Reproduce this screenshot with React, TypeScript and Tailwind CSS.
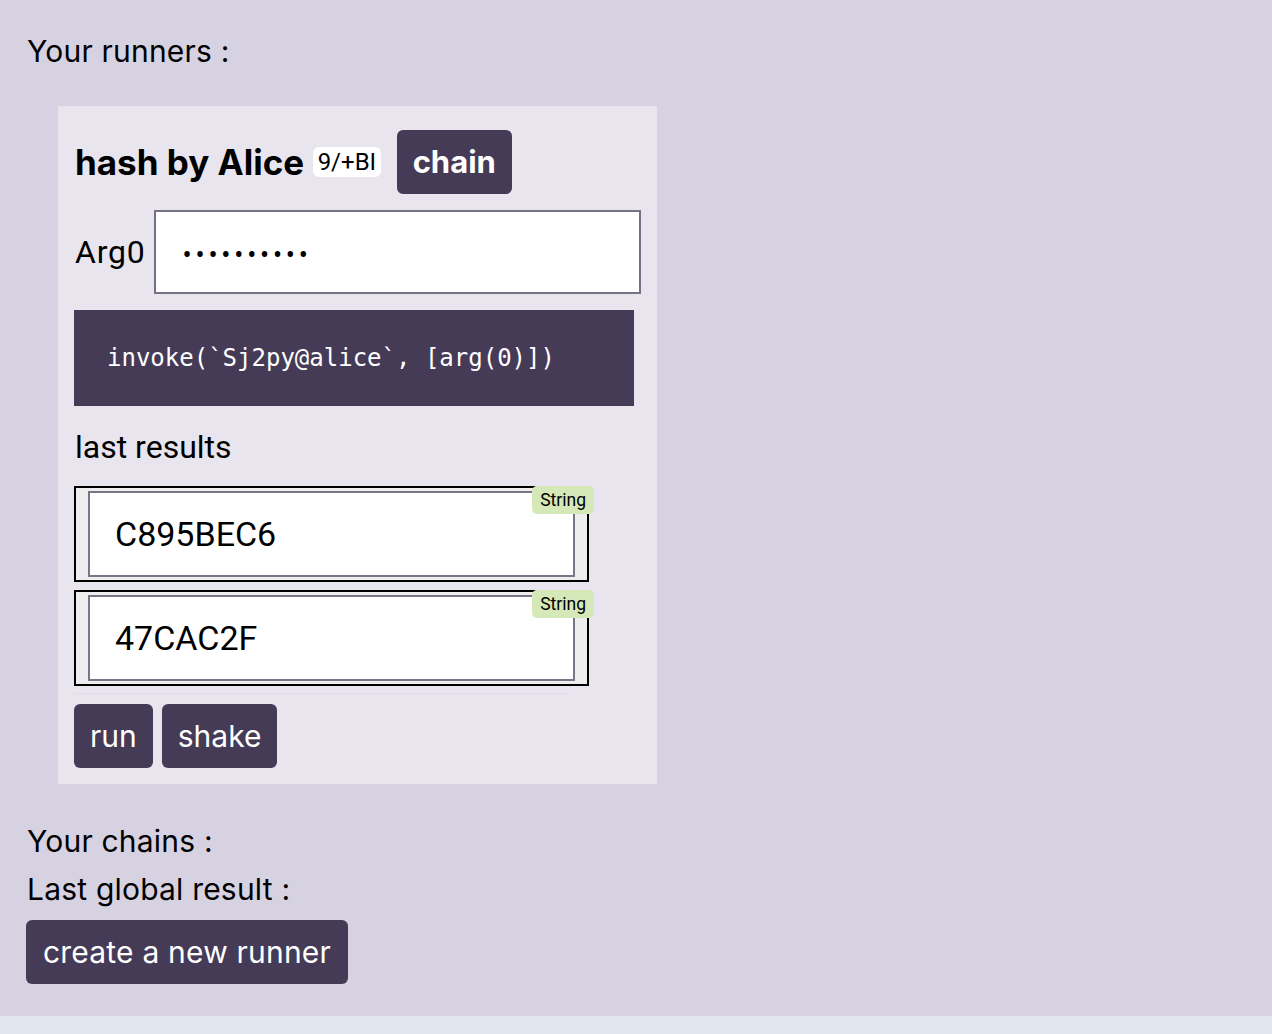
import React from "react";

const dark = "bg-[#453b57]";

function ResultBox({ value }: { value: string }) {
  return (
    <div className="relative w-[515px] h-[96px] border-2 border-black bg-[#eeeeee] pl-3 pt-[3px]">
      <div className="w-[487px] h-[86px] border-2 border-[#7a7585] bg-white flex items-center pl-[25px] font-['Roboto',sans-serif] text-[34px] text-black">
        {value}
      </div>
      <div className="absolute right-[-7px] top-[-2px] h-[28px] px-[8px] rounded-[5px] bg-[#d4e8b8] flex items-center font-['Roboto',sans-serif] text-[17.5px] text-black">
        String
      </div>
    </div>
  );
}

export default function App() {
  return (
    <div className="min-h-screen bg-[#e2e6ef]">
      <div className="h-[1016px] bg-[#d7d2e2] pl-[27px] pt-[34px] font-['Inter',sans-serif] text-[30px] tracking-[0.2px] text-black">
        <div className="h-[34px] leading-[34px]">Your runners :</div>
        <div className="ml-[31px] mt-[38px] w-[599px] bg-[#e8e5ef] pl-4 pr-4 pt-6 pb-4 tracking-normal">
          <div className="flex items-center h-[64px]">
            <span className="pl-px font-['Inter',sans-serif] font-bold text-[35px] leading-none">hash by Alice</span>
            <span className="ml-[9px] h-[30px] px-[4.5px] rounded-[6px] bg-white flex items-center font-['Roboto',sans-serif] text-[24px] leading-none">
              9/+BI
            </span>
            <button className={`ml-[16px] h-[64px] px-[16px] rounded-[6px] ${dark} text-white font-['Inter',sans-serif] font-bold text-[31px]`}>
              chain
            </button>
          </div>
          <div className="flex items-center mt-4">
            <span className="font-['Roboto',sans-serif] text-[32px] tracking-[0.8px] pl-px">Arg0</span>
            <div className="ml-[8px] w-[488px] h-[84px] border-2 border-[#757083] bg-white flex items-center pl-[27px] pt-[7px] font-['Roboto',sans-serif] text-[27px] tracking-[3.8px] leading-none">
              ••••••••••
            </div>
          </div>
          <div className={`mt-4 w-[560px] h-[96px] ${dark} flex items-center pl-[33px] font-['DejaVu_Sans_Mono',monospace] text-[24px] text-white`}>
            invoke(`Sj2py@alice`, [arg(0)])
          </div>
          <div className="mt-[24px] h-[34px] leading-[34px] font-['Roboto',sans-serif] text-[32px] pl-px">last results</div>
          <div className="mt-[22px]">
            <ResultBox value="C895BEC6" />
          </div>
          <div className="mt-2">
            <ResultBox value="47CAC2F" />
          </div>
          <div className="mt-[7px] w-[494px] h-px bg-[#e0dce8]" />
          <div className="mt-[10px] flex gap-[9px]">
            <button className={`h-[64px] px-[16px] rounded-[6px] ${dark} text-white text-[30px]`}>run</button>
            <button className={`h-[64px] px-[16px] rounded-[6px] ${dark} text-white text-[30px]`}>shake</button>
          </div>
        </div>
        <div className="mt-[33px] h-[48px] leading-[48px]">Your chains :</div>
        <div className="h-[48px] leading-[48px]">Last global result :</div>
        <button className={`mt-[7px] -ml-px h-[64px] px-[17px] rounded-[6px] ${dark} text-white text-[30px]`}>
          create a new runner
        </button>
      </div>
    </div>
  );
}
